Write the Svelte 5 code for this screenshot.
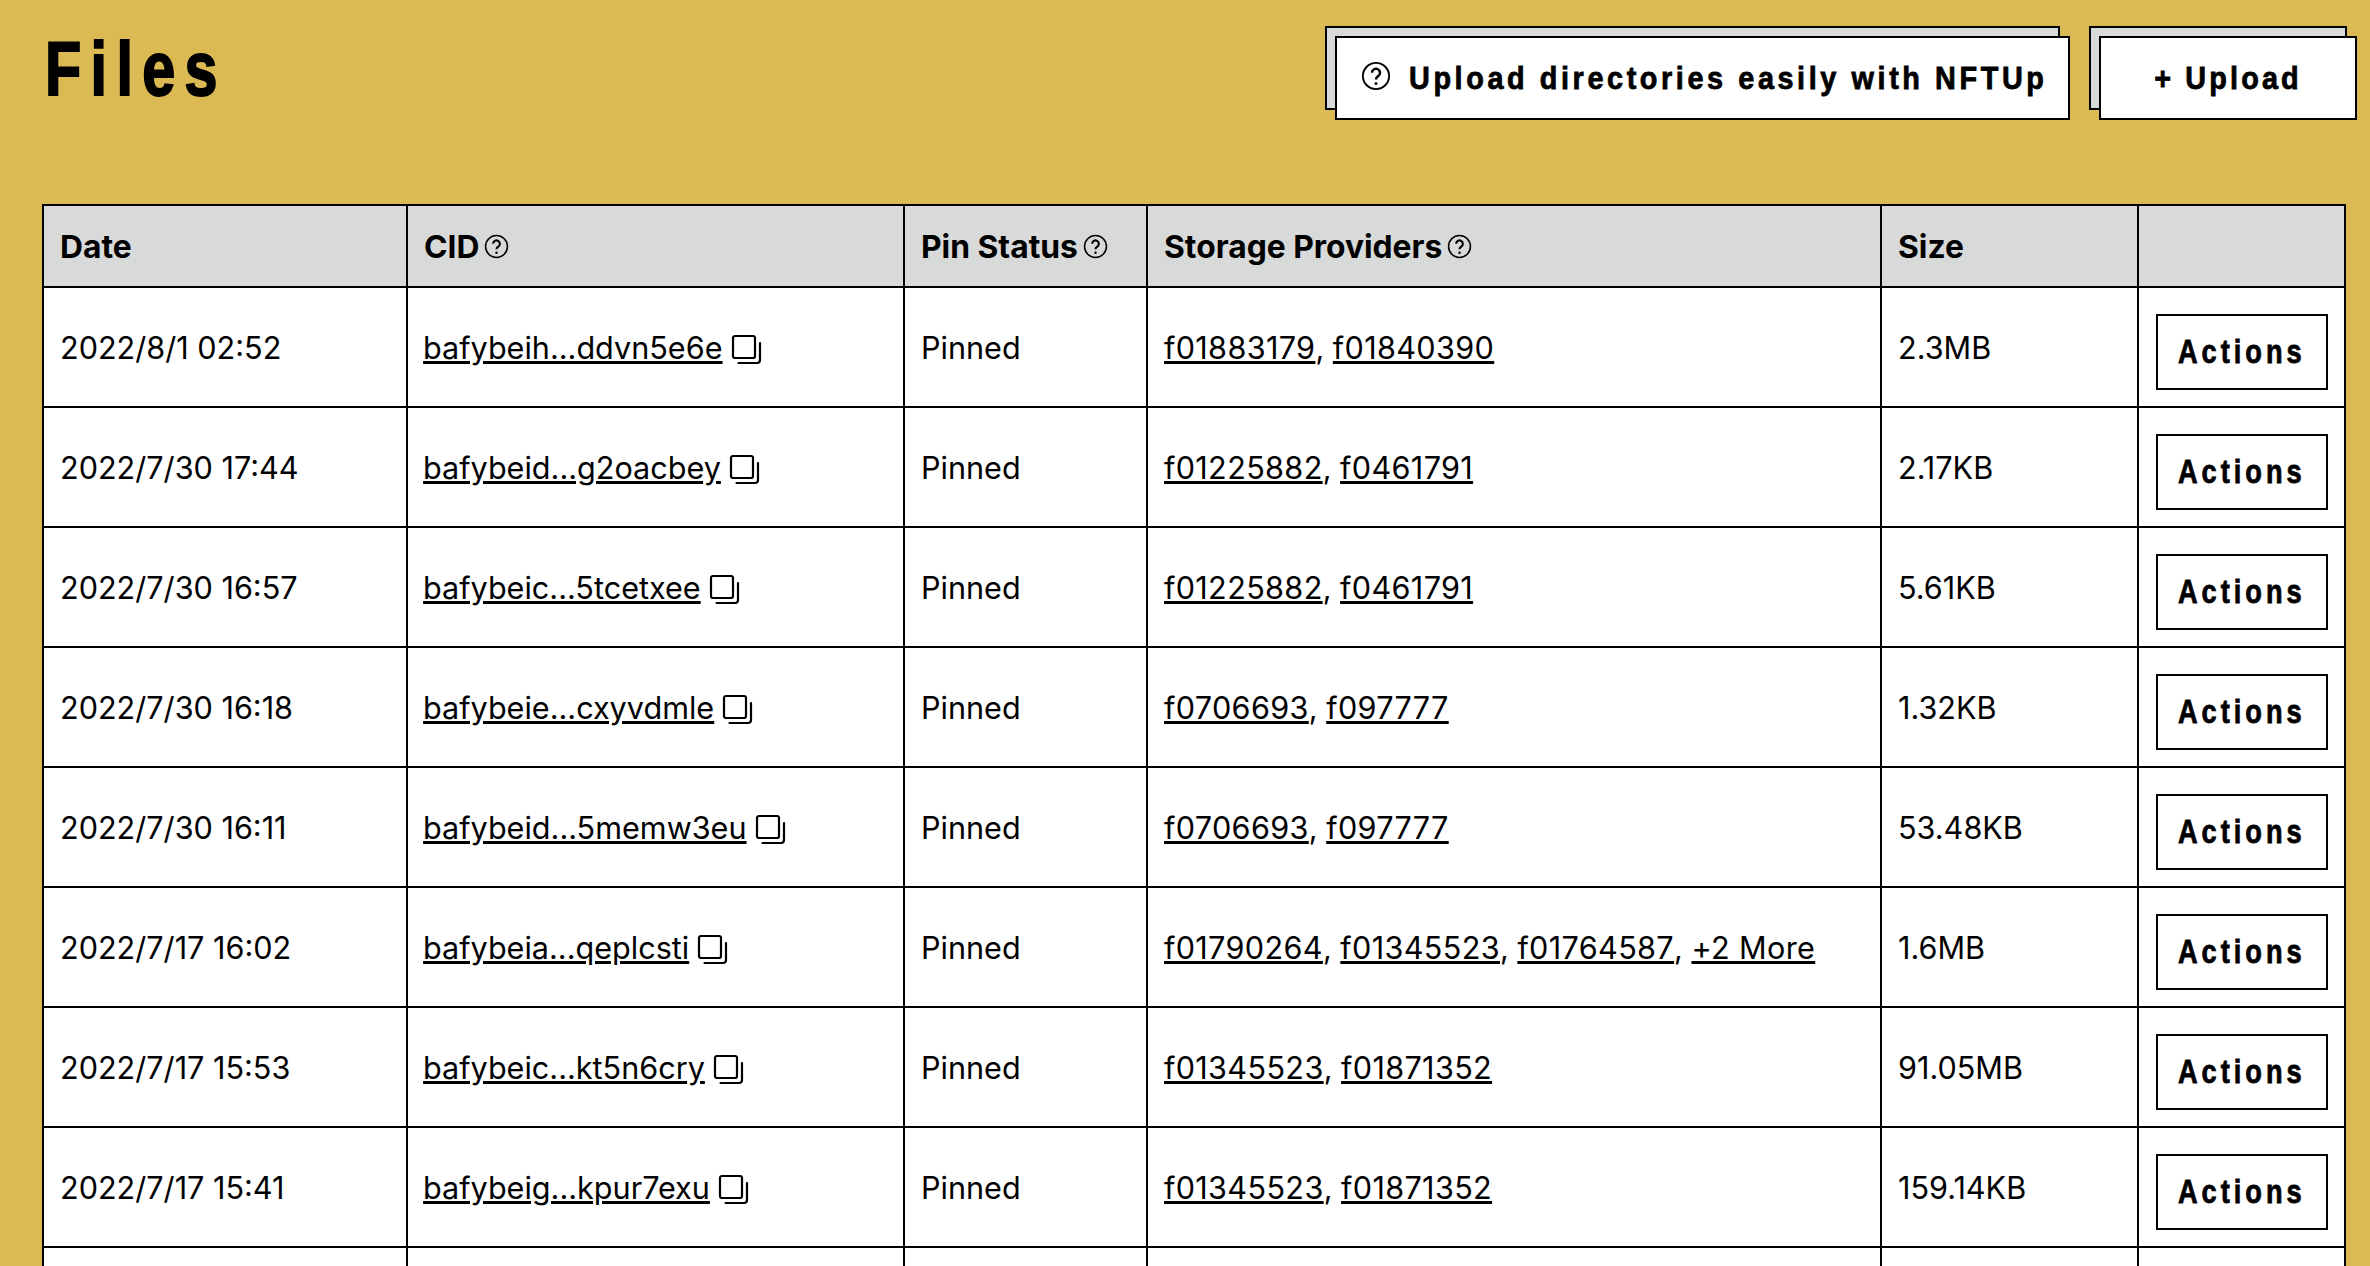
<script>
  const rows = [
    { date: '2022/8/1 02:52', cid: 'bafybeih...ddvn5e6e', providers: ['f01883179', 'f01840390'], size: '2.3MB' },
    { date: '2022/7/30 17:44', cid: 'bafybeid...g2oacbey', providers: ['f01225882', 'f0461791'], size: '2.17KB' },
    { date: '2022/7/30 16:57', cid: 'bafybeic...5tcetxee', providers: ['f01225882', 'f0461791'], size: '5.61KB' },
    { date: '2022/7/30 16:18', cid: 'bafybeie...cxyvdmle', providers: ['f0706693', 'f097777'], size: '1.32KB' },
    { date: '2022/7/30 16:11', cid: 'bafybeid...5memw3eu', providers: ['f0706693', 'f097777'], size: '53.48KB' },
    { date: '2022/7/17 16:02', cid: 'bafybeia...qeplcsti', providers: ['f01790264', 'f01345523', 'f01764587', '+2 More'], size: '1.6MB' },
    { date: '2022/7/17 15:53', cid: 'bafybeic...kt5n6cry', providers: ['f01345523', 'f01871352'], size: '91.05MB' },
    { date: '2022/7/17 15:41', cid: 'bafybeig...kpur7exu', providers: ['f01345523', 'f01871352'], size: '159.14KB' }
  ];
</script>

{#snippet help(size)}
  <svg class="help" width={size} height={size} viewBox="0 0 24 24" fill="none" stroke="currentColor" stroke-width="1.5">
    <circle cx="12" cy="12" r="10.5" />
    <path d="M8.8 9.4a3.2 3.2 0 1 1 4.9 2.7c-1.1.7-1.7 1.3-1.7 2.6" stroke-width="2" />
    <circle cx="12" cy="18" r="1.2" fill="currentColor" stroke="none" />
  </svg>
{/snippet}

<div class="page">
  <header class="top">
    <h1><span>Files</span></h1>
    <div class="buttons">
      <button class="stacked nftup">{@render help(30)}<span class="label">Upload directories easily with NFTUp</span></button>
      <button class="stacked upload"><span class="label">+ Upload</span></button>
    </div>
  </header>

  <table>
    <colgroup>
      <col style="width: 364px" />
      <col style="width: 497px" />
      <col style="width: 243px" />
      <col style="width: 734px" />
      <col style="width: 257px" />
      <col style="width: 207px" />
    </colgroup>
    <thead>
      <tr>
        <th>Date</th>
        <th><span class="th-inner">CID {@render help(25)}</span></th>
        <th><span class="th-inner">Pin Status {@render help(25)}</span></th>
        <th><span class="th-inner">Storage Providers {@render help(25)}</span></th>
        <th>Size</th>
        <th></th>
      </tr>
    </thead>
    <tbody>
      {#each rows as row}
        <tr>
          <td>{row.date}</td>
          <td>
            <span class="cid">
              <a href="#cid">{row.cid}</a>
              <svg class="copy" width="32" height="31" viewBox="0 0 32 31" fill="none" stroke="currentColor" stroke-width="2.2" stroke-linecap="round">
                <rect x="2" y="2" width="22" height="22" rx="2" />
                <path d="M7.5 29h18.500a3 3 0 0 0 3-3V9" />
              </svg>
            </span>
          </td>
          <td>Pinned</td>
          <td class="providers">
            {#each row.providers as p, i}{#if i > 0}{', '}{/if}<a href="#provider">{p}</a>{/each}
          </td>
          <td>{row.size}</td>
          <td class="act"><button class="actions"><span>Actions</span></button></td>
        </tr>
      {/each}
      <tr>
        <td></td><td></td><td></td><td></td><td></td><td></td>
      </tr>
    </tbody>
  </table>
</div>

<style>
  :global(body) {
    background: #dcba53;
    overflow: hidden;
  }

  .page {
    padding: 0 13px 0 42px;
    font-family: Inter, "Liberation Sans", sans-serif;
    color: #000;
    height: 1266px;
    overflow: hidden;
  }

  .top {
    display: flex;
    justify-content: space-between;
    align-items: flex-start;
    height: 204px;
  }

  h1 {
    margin: 26px 0 0 3px;
    font-family: "Liberation Sans", sans-serif;
    font-weight: 700;
    font-size: 76px;
    line-height: 86px;
    letter-spacing: 12px;
    -webkit-text-stroke: 2px #000;
  }

  h1 span {
    display: inline-block;
    transform: scaleX(0.78);
    transform-origin: left center;
  }

  .buttons {
    display: flex;
    gap: 29px;
    margin-top: 36px;
  }

  button {
    font-family: "Liberation Sans", sans-serif;
    font-weight: 700;
    color: #000;
    background: #fff;
    border: 2px solid #000;
    padding: 0;
  }

  .stacked {
    height: 84px;
    font-size: 32px;
    letter-spacing: 4px;
    white-space: nowrap;
    box-shadow: -10px -10px 0 -2px #d8dad9, -10px -10px 0 0 #000;
    display: flex;
    align-items: center;
    -webkit-text-stroke: 0.8px #000;
  }

  .label {
    display: inline-block;
    transform: scaleX(0.9);
  }

  .help {
    flex: none;
  }

  .nftup {
    width: 735px;
    padding-left: 24px;
    gap: 18px;
  }

  .nftup .help {
    margin-top: -4px;
  }

  .nftup .label {
    transform-origin: left center;
  }

  .upload {
    width: 258px;
    justify-content: center;
    letter-spacing: 3.5px;
  }

  table {
    width: 2304px;
    table-layout: fixed;
    border-collapse: collapse;
    background: #fff;
  }

  th, td {
    border: 2px solid #000;
    padding: 0 16px;
    text-align: left;
    font-size: 30.6px;
    white-space: nowrap;
  }

  th {
    background: #d8dad9;
    height: 80px;
    font-size: 31.8px;
    font-weight: 700;
  }

  td {
    height: 118px;
  }

  .th-inner {
    display: inline-flex;
    align-items: center;
    gap: 5px;
  }

  a {
    color: #000;
    text-decoration: underline;
  }

  .providers a {
    letter-spacing: 0.35px;
  }

  .cid {
    display: inline-flex;
    align-items: center;
    gap: 8px;
    margin-left: -1px;
  }

  .copy {
    margin-top: 4px;
  }

  .act {
    padding: 0;
  }

  .actions {
    display: block;
    width: 172px;
    height: 76px;
    margin: 9px auto 0;
    font-size: 34px;
    letter-spacing: 5px;
    -webkit-text-stroke: 0.8px #000;
  }

  .actions span {
    display: inline-block;
    transform: scaleX(0.8);
  }
</style>
